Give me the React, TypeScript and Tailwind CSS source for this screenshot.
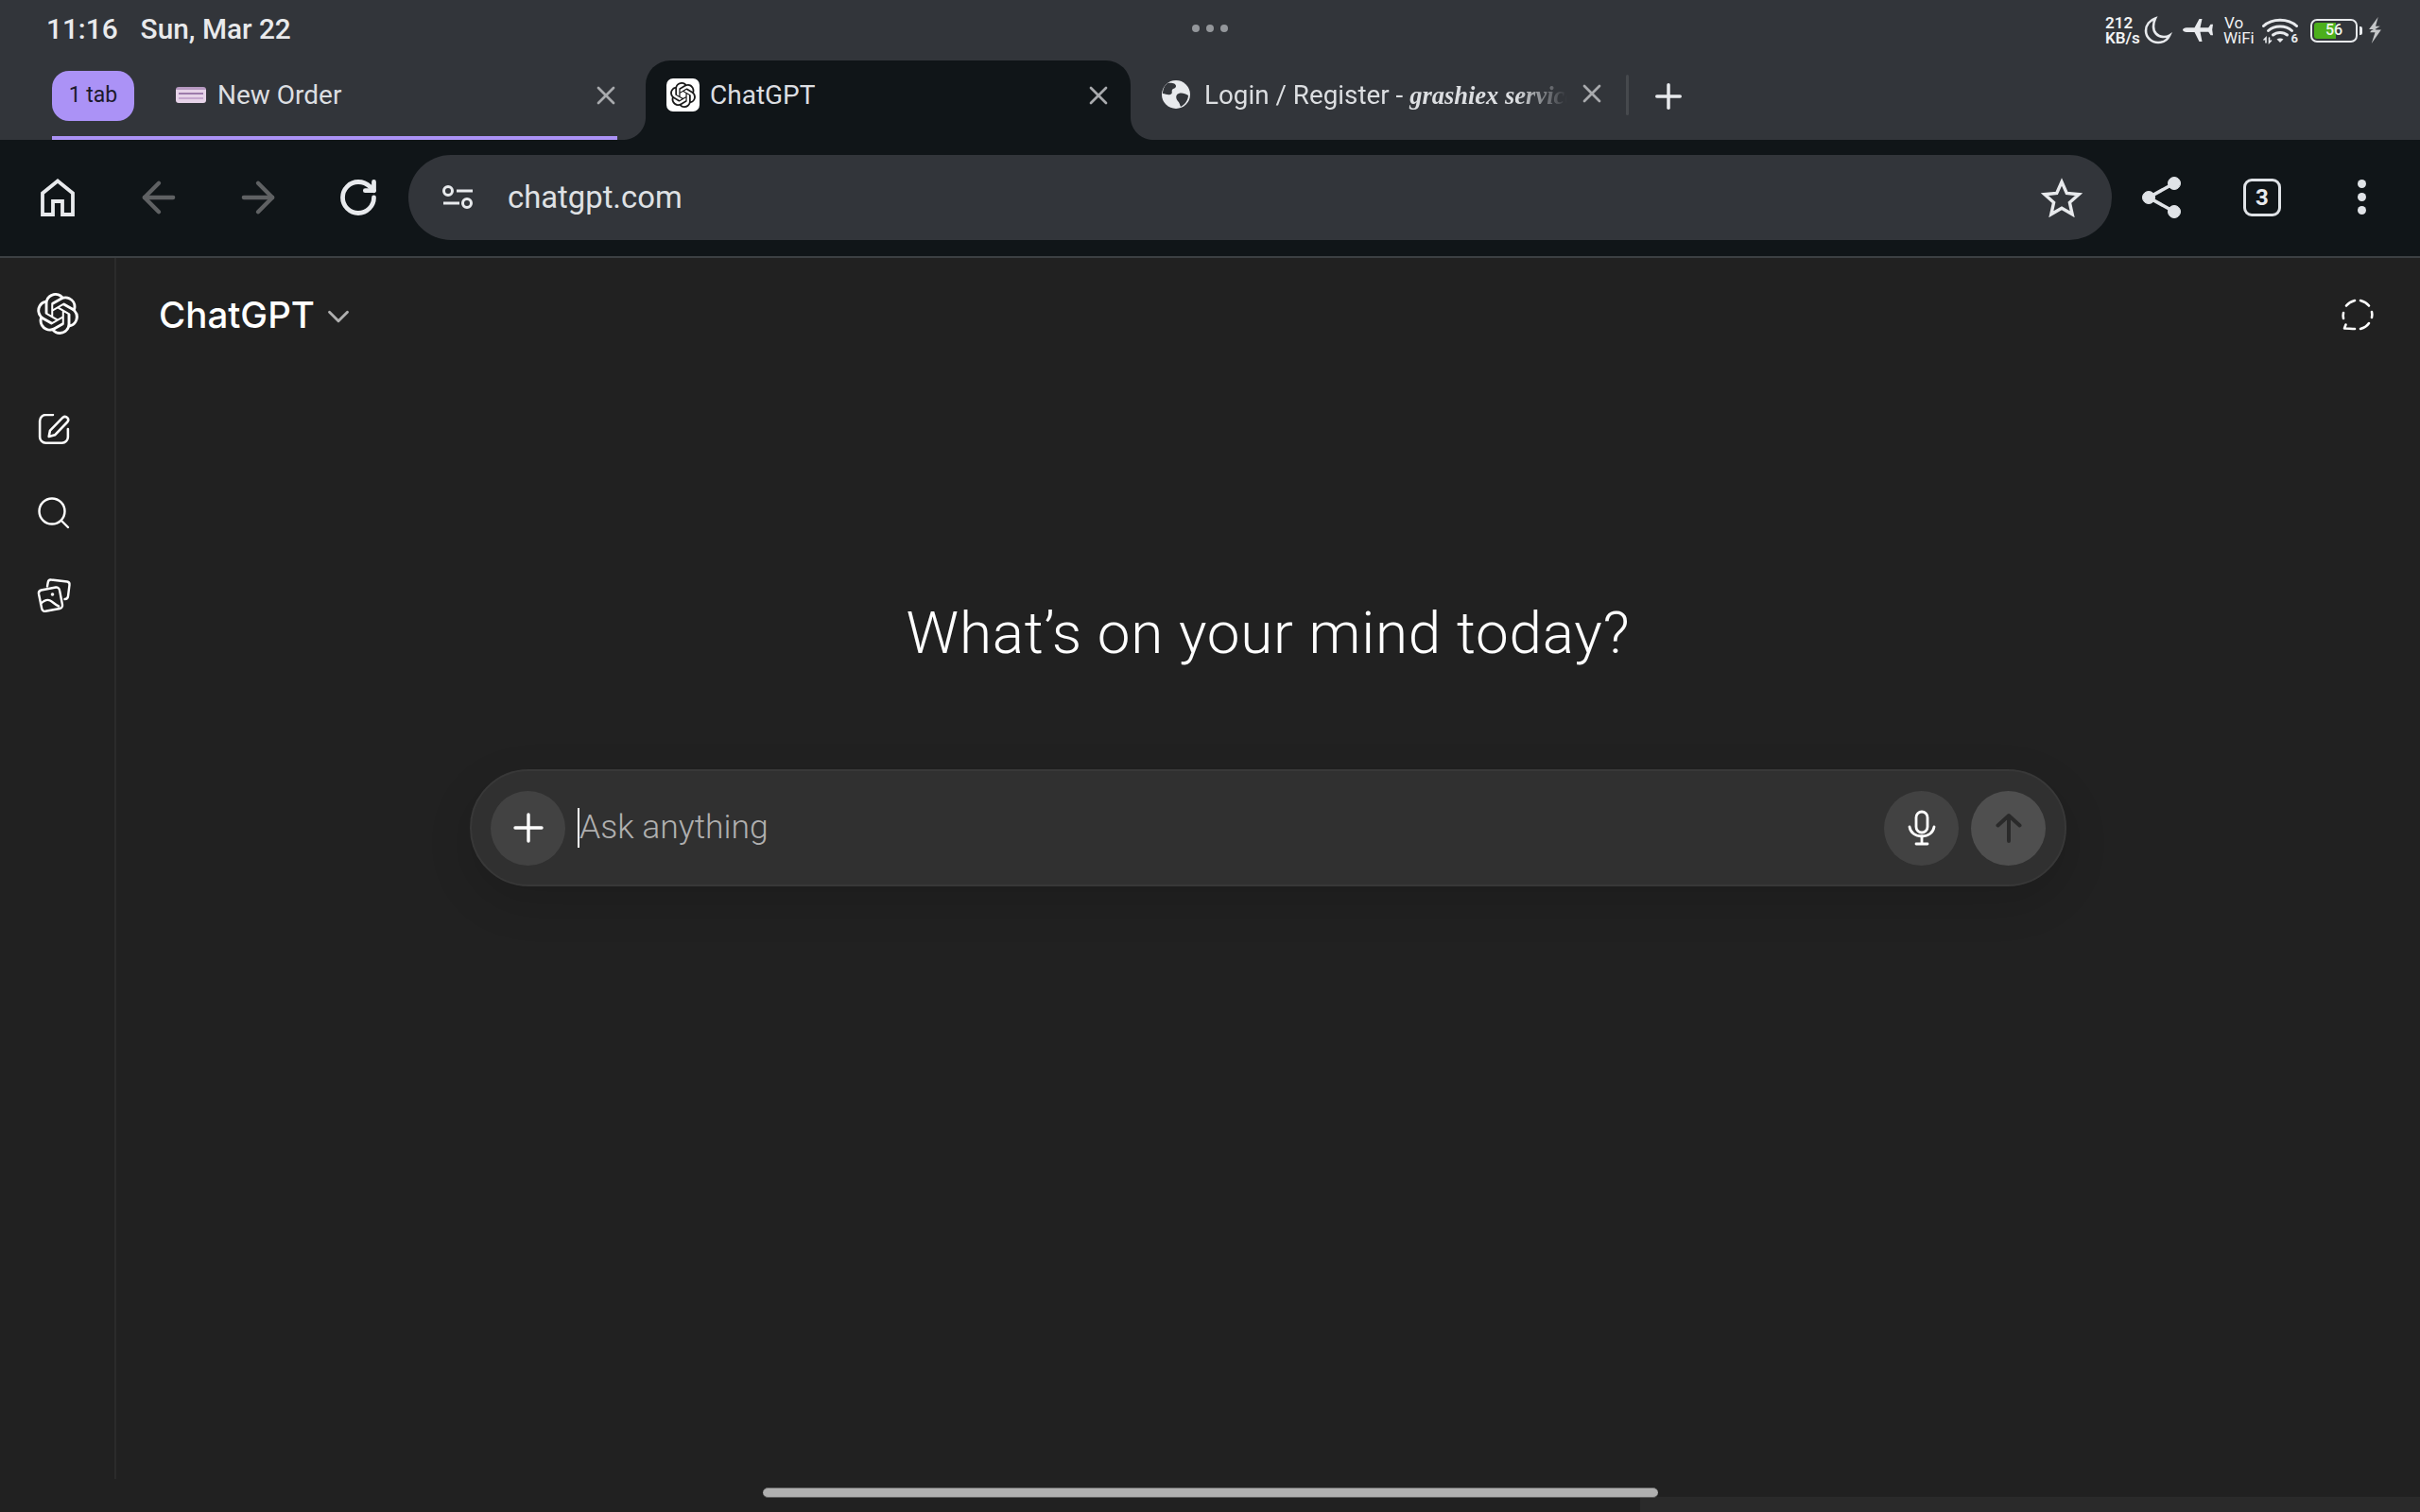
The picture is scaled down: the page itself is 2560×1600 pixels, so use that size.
import { ArrowLeft, ArrowRight, ChevronDown, Plus, RotateCw, X } from "lucide-react";

const OPENAI =
  "M22.2819 9.8211a5.9847 5.9847 0 0 0-.5157-4.9108 6.0462 6.0462 0 0 0-6.5098-2.9A6.0651 6.0651 0 0 0 4.9807 4.1818a5.9847 5.9847 0 0 0-3.9977 2.9 6.0462 6.0462 0 0 0 .7427 7.0966 5.98 5.98 0 0 0 .511 4.9107 6.051 6.051 0 0 0 6.5146 2.9001A5.9847 5.9847 0 0 0 13.2599 24a6.0557 6.0557 0 0 0 5.7718-4.2058 5.9894 5.9894 0 0 0 3.9977-2.9001 6.0557 6.0557 0 0 0-.7475-7.0729zm-9.022 12.6081a4.4755 4.4755 0 0 1-2.8764-1.0408l.1419-.0804 4.7783-2.7582a.7948.7948 0 0 0 .3927-.6813v-6.7369l2.02 1.1686a.071.071 0 0 1 .038.052v5.5826a4.504 4.504 0 0 1-4.4945 4.4944zm-9.6607-4.1254a4.4708 4.4708 0 0 1-.5346-3.0137l.142.0852 4.783 2.7582a.7712.7712 0 0 0 .7806 0l5.8428-3.3685v2.3324a.0804.0804 0 0 1-.0332.0615L9.74 19.9502a4.4992 4.4992 0 0 1-6.1408-1.6464zM2.3408 7.8956a4.485 4.485 0 0 1 2.3655-1.9728V11.6a.7664.7664 0 0 0 .3879.6765l5.8144 3.3543-2.0201 1.1685a.0757.0757 0 0 1-.071 0l-4.8303-2.7865A4.504 4.504 0 0 1 2.3408 7.872zm16.5963 3.8558L13.1038 8.364 15.1192 7.2a.0757.0757 0 0 1 .071 0l4.8303 2.7913a4.4944 4.4944 0 0 1-.6765 8.1042v-5.6772a.79.79 0 0 0-.407-.667zm2.0107-3.0231l-.142-.0852-4.7735-2.7818a.7759.7759 0 0 0-.7854 0L9.409 9.2297V6.8974a.0662.0662 0 0 1 .0284-.0615l4.8303-2.7866a4.4992 4.4992 0 0 1 6.6802 4.66zM8.3065 12.863l-2.02-1.1638a.0804.0804 0 0 1-.038-.0567V6.0742a4.4992 4.4992 0 0 1 7.3757-3.4537l-.142.0805L8.704 5.459a.7948.7948 0 0 0-.3927.6813zm1.0976-2.3654l2.602-1.4998 2.6069 1.4998v2.9994l-2.5974 1.4997-2.6067-1.4997Z";

function OpenAiLogo({ className }: { className: string }) {
  return (
    <svg viewBox="0 0 24 24" fill="currentColor" className={className}>
      <path d={OPENAI} />
    </svg>
  );
}

function StatusIcons() {
  return (
    <div className="flex items-center text-[#e8eaed]">
      <div className="w-[36px] text-[17px] leading-[16px] font-semibold text-[#f1f2f3]">
        <div>212</div>
        <div className="whitespace-nowrap">KB/s</div>
      </div>
      {/* moon */}
      <svg viewBox="0 0 30 30" className="ml-[5px] w-[30px] h-[30px]" fill="none" stroke="currentColor" strokeWidth="2.6">
        <path d="M12 2.5C6 4.5 2 9.5 2 15.5 2 22.5 8 28 15 28c5.5 0 10-3 12-7.5-1.5 1-4 1.500-6 1.500-7 0-11-5-11-11 0-3 .8-6 2-8.500z" />
      </svg>
      {/* plane */}
      <svg viewBox="0 0 34 30" className="ml-[11px] w-[34px] h-[30px]" fill="currentColor">
        <path d="M0 14.500c0-1.300 2-2.300 4-2.300h8.500L17.500 3h3l-2 9.200h8.700l2.300-3.500H32l-.8 5.800.8 5.800h-2.500l-2.300-3.500h-8.700l2 10.200h-3L12.500 17H4c-2 0-4-1.200-4-2.500z" />
      </svg>
      <div className="ml-[9px] w-[34px] text-[17px] leading-[16px] font-normal text-[#f1f2f3]">
        <div className="pl-[1px]">Vo</div>
        <div className="whitespace-nowrap">WiFi</div>
      </div>
      {/* wifi with activity arrows and the 6 */}
      <div className="ml-[7px] relative w-[38px] h-[30px]">
        <svg viewBox="0 0 38 30" className="w-[38px] h-[30px]" fill="none" stroke="currentColor" strokeWidth="3" strokeLinecap="round">
          <path d="M1.500 10.500C10.500 2 27.500 2 36.500 10.500" />
          <path d="M6.500 15.500C13 9.500 25 9.500 31.500 15.500" />
          <path d="M11.500 20C15.500 16.500 22.500 16.500 26.500 20" />
          <path d="M15.500 24.500l3.500 3.500 3.500-3.500c-2-1.300-5-1.300-7 0z" fill="currentColor" stroke="none" />
          <path d="M2 25l2-2v5M7.500 23v5l2-2" strokeWidth="1.600" />
        </svg>
        <span className="absolute right-[0px] bottom-[-1px] text-[13px] leading-[14px] font-bold">6</span>
      </div>
      {/* battery */}
      <div className="ml-[13px] flex items-center">
        <div className="w-[50px] h-[25px] rounded-[7px] border-2 border-[#e8eaed] p-[2px] relative">
          <div className="w-[23px] h-full rounded-l-[3px] bg-[#4caf1c]" />
          <span className="absolute inset-0 flex items-center justify-center text-[16px] leading-none font-medium text-[#eef5ea]">56</span>
        </div>
        <div className="ml-[2px] w-[3px] h-[9px] rounded-r-[2px] bg-[#e8eaed]" />
      </div>
      <svg viewBox="0 0 14 26" className="ml-[6px] mr-[1px] w-[15px] h-[28px]" fill="#c4c6c8">
        <path d="M10 0 1 12h4.500L3 13.500l-1 1.500h5L3.500 26 13 12.500H8l-1-.5 5-3H7.500z" />
      </svg>
    </div>
  );
}

function StatusBar() {
  return (
    <div className="h-[64px] flex items-center pl-[49px] pr-[39px] text-[#e9eaec]">
      <div className="flex-1 flex items-center text-[29.800px] leading-none font-medium pb-[3px]">
        <span>11:16</span>
        <span className="ml-[24px]">Sun, Mar 22</span>
      </div>
      <div className="flex items-center gap-[7px] pb-[4px] w-[260px] mr-[10px] justify-center">
        <span className="w-[8px] h-[8px] rounded-full bg-[#94979b]" />
        <span className="w-[8px] h-[8px] rounded-full bg-[#94979b]" />
        <span className="w-[8px] h-[8px] rounded-full bg-[#94979b]" />
      </div>
      <div className="flex-1 flex justify-end">
        <StatusIcons />
      </div>
    </div>
  );
}

function TabClose() {
  return <X className="w-[32px] h-[32px] text-[#a8aaad]" strokeWidth={2} />;
}

function TabStrip() {
  return (
    <div className="h-[84px] flex pl-[55px]">
      {/* tab group */}
      <div className="w-[598px] h-full pt-[11px] border-b-[4px] border-[#ab92f6] flex items-start">
        <div className="w-[87px] h-[53px] rounded-[18px] bg-[#ab92f6] flex items-center justify-center text-[23px] text-[#1c1a2b]">
          1 tab
        </div>
        {/* little pink favicon */}
        <div className="ml-[44px] mt-[17px] w-[32px] h-[17px] rounded-[3px] bg-[#e6d3e8] border-t-[3px] border-[#b79ac2] relative">
          <div className="absolute inset-x-[3px] top-[3px] h-[2px] bg-[#9c7bab]" />
          <div className="absolute inset-x-[3px] top-[8px] h-[2px] bg-[#c6a8cf]" />
        </div>
        <span className="ml-[12px] mt-[8px] text-[28px] leading-[36px] text-[#dcdee1]">New Order</span>
        <div className="ml-auto mt-[10px] mr-[-4px]">
          <TabClose />
        </div>
      </div>

      {/* active tab */}
      <div className="ml-[30px] w-[513px] h-full bg-[#101518] rounded-t-[26px] relative flex items-start pl-[22px] pt-[19px]">
        <span className="absolute left-[-24px] bottom-0 w-[24px] h-[24px] bg-[radial-gradient(circle_at_0_0,#32353a_23.5px,#101518_24.5px)]" />
        <span className="absolute right-[-24px] bottom-0 w-[24px] h-[24px] bg-[radial-gradient(circle_at_100%_0,#32353a_23.5px,#101518_24.5px)]" />
        <div className="w-[35px] h-[35px] rounded-[7px] bg-white flex items-center justify-center text-[#1b1b1b]">
          <OpenAiLogo className="w-[27px] h-[27px]" />
        </div>
        <span className="ml-[11px] text-[28px] leading-[36px] text-[#dcdee1]">ChatGPT</span>
        <div className="ml-auto mr-[18px] mt-[2px]">
          <TabClose />
        </div>
      </div>

      {/* third tab */}
      <div className="ml-[33px] h-full flex items-start pt-[18px]">
        <div className="w-[30px] h-[30px] mt-[3px] rounded-full bg-[#e8eaed] relative overflow-hidden">
          <svg viewBox="0 0 30 30" className="w-full h-full" fill="#32353a">
            <path d="M6 3c4-1 9 0 9 3 0 3-3 2-4 4s1 4-2 5-5-1-8-1c0-4 2-9 5-11zM18 14c3-1 7 0 10 2 0 5-4 10-8 12-1-2-1-4-3-6s-3-7 1-8z" />
          </svg>
        </div>
        <div className="ml-[15px] mt-[1px] w-[384px] whitespace-nowrap overflow-hidden [mask-image:linear-gradient(to_right,black_86%,transparent_100%)] text-[27.800px] leading-[36px] text-[#dcdee1]">
          Login / Register -{" "}
          <span className="font-['Liberation_Serif',serif] italic font-bold text-[26.500px]">grashiex service</span>
        </div>
        <div className="ml-[10px] mt-[1px]">
          <TabClose />
        </div>
        <div className="ml-[20px] mt-[-3px] w-[3px] h-[43px] rounded-full bg-[#46494d]" />
        <Plus className="ml-[21px] mt-[-1px] w-[42px] h-[42px] text-[#e8eaed]" strokeWidth={2} />
      </div>
    </div>
  );
}

function HomeIcon() {
  return (
    <svg viewBox="0 0 36 40" className="w-[36px] h-[40px]" fill="none" stroke="#e8eaed" strokeWidth="3.800">
      <path d="M18 2.500 2 15.500V38h11V24h10v14h11V15.500z" strokeLinejoin="miter" />
    </svg>
  );
}

function TuneIcon() {
  return (
    <svg viewBox="0 0 36 28" className="w-[36px] h-[28px]" fill="none" stroke="#e8eaed" strokeWidth="3">
      <circle cx="7" cy="7" r="4.500" />
      <path d="M16 7h17M2 20h17" />
      <circle cx="27" cy="20" r="4.500" />
    </svg>
  );
}

function StarIcon() {
  return (
    <svg viewBox="0 0 44 42" className="ml-auto w-[44px] h-[42px]" fill="none" stroke="#e8eaed" strokeWidth="3.400" strokeLinejoin="miter">
      <path d="M22 4.500 27.300 16.500 40 17.700 30.400 26.300 33.200 38.800 22 32.200 10.800 38.800 13.600 26.300 4 17.700 16.700 16.500z" />
    </svg>
  );
}

function ShareIcon() {
  return (
    <svg viewBox="0 0 42 46" className="w-[42px] h-[46px]" fill="#e0e3e7" stroke="#e0e3e7">
      <path d="M34 8 7 23l27 15" fill="none" strokeWidth="3.600" />
      <circle cx="34" cy="8" r="6.500" />
      <circle cx="7" cy="23" r="6.500" />
      <circle cx="34" cy="38" r="6.500" />
    </svg>
  );
}

function Toolbar() {
  return (
    <div className="h-[125px] bg-[#101518] border-b-2 border-[#3c4043] flex items-center pb-[2px] relative">
      <div className="w-[122px] flex justify-center">
        <HomeIcon />
      </div>
      <div className="w-[104px] flex justify-center ml-[-6px]">
        <ArrowLeft className="w-[52px] h-[52px] text-[#5f6163]" strokeWidth={2} />
      </div>
      <div className="w-[106px] flex justify-center">
        <ArrowRight className="w-[52px] h-[52px] text-[#5f6163]" strokeWidth={2} />
      </div>
      <div className="w-[106px] flex justify-center">
        <RotateCw className="w-[44px] h-[44px] text-[#e8eaed]" strokeWidth={2.6} />
      </div>
      {/* address bar */}
      <div className="w-[1802px] h-[90px] rounded-full bg-[#32353a] flex items-center pl-[35px] pr-[31px]">
        <TuneIcon />
        <span className="ml-[34px] pt-[2px] text-[32.800px] leading-none text-[#dfe1e4]">chatgpt.com</span>
        <StarIcon />
      </div>
      <div className="ml-[32px] w-[42px]">
        <ShareIcon />
      </div>
      <div className="ml-[65px] w-[40px] h-[40px] rounded-[9px] border-[3px] border-[#dfe2e6] flex items-center justify-center text-[24px] leading-none font-bold text-[#e8eaed]">
        3
      </div>
      <div className="ml-[81px] flex flex-col gap-[5px]">
        <span className="w-[9px] h-[9px] rounded-full bg-[#e0e3e7]" />
        <span className="w-[9px] h-[9px] rounded-full bg-[#e0e3e7]" />
        <span className="w-[9px] h-[9px] rounded-full bg-[#e0e3e7]" />
      </div>
    </div>
  );
}

function ComposeIcon() {
  return (
    <svg viewBox="0 0 32 32" className="w-[34px] h-[34px]" fill="none" stroke="#fff" strokeWidth="2.400" strokeLinecap="round" strokeLinejoin="round">
      <path d="M15 2H8a6 6 0 0 0-6 6v16a6 6 0 0 0 6 6h16a6 6 0 0 0 6-6V16" transform="translate(0 -1)" />
      <path d="M25 3.500a3.200 3.200 0 0 1 4.500 4.500L17 21l-6 1.500 1.200-6z" />
    </svg>
  );
}

function SearchIcon() {
  return (
    <svg viewBox="0 0 34 34" className="w-[34px] h-[34px]" fill="none" stroke="#fff" strokeWidth="2.400" strokeLinecap="round">
      <circle cx="15" cy="15" r="13.500" />
      <path d="m25 25 7 7" />
    </svg>
  );
}

function GalleryIcon() {
  return (
    <svg viewBox="0 0 38 38" className="w-[38px] h-[38px]" fill="none" stroke="#fff" strokeWidth="2.400" strokeLinecap="round" strokeLinejoin="round">
      <path d="M5.500 13.500 21 10.500a3.500 3.500 0 0 1 4 3l3 15.500a3.500 3.500 0 0 1-2.800 4l-15 2.800a3.500 3.500 0 0 1-4-2.800L3 17.500a3.500 3.500 0 0 1 2.500-4z" />
      <path d="M12 9.500 12.800 5a3 3 0 0 1 3.400-2.500L33 4.500a3 3 0 0 1 2.500 3.300L34 20a3.500 3.500 0 0 1-3.500 3" />
      <circle cx="17.500" cy="18" r="1.800" fill="#fff" stroke="none" />
      <path d="M5 28c3-3 7-5 10-3.500s6 5 9 6" />
    </svg>
  );
}

function Sidebar() {
  return (
    <aside className="w-[123px] h-[1292px] border-r-2 border-[#2b2b2b] shrink-0 flex flex-col items-start">
      <OpenAiLogo className="ml-[39px] mt-[37px] w-[44px] h-[44px] text-white" />
      <div className="ml-[40px] mt-[84px]">
        <ComposeIcon />
      </div>
      <div className="ml-[40px] mt-[54px]">
        <SearchIcon />
      </div>
      <div className="ml-[38px] mt-[51px]">
        <GalleryIcon />
      </div>
    </aside>
  );
}

function TempChatIcon() {
  return (
    <svg viewBox="0 0 36 36" className="w-[36px] h-[36px]" fill="none" stroke="#fff" strokeWidth="2.600" strokeLinecap="round" strokeLinejoin="round">
      <path d="M6 8.500C8 6 11 4 15 3" />
      <path d="M21 3c4 1 7 3 9 5.500" />
      <path d="M33 15c.5 2 .5 4 0 6" />
      <path d="M30 27c-2 3-5 5-9 6" />
      <path d="M15 33c-3 0-8-.5-11-.5l1.500-4" />
      <path d="M3 22c-.5-2-.5-4 0-6" />
    </svg>
  );
}

function Composer() {
  return (
    <div className="w-[1689px] h-[124px] rounded-full bg-[#303030] border-2 border-[#383838] shadow-[0_16px_48px_rgba(0,0,0,0.14)] flex items-center pl-[20px] pr-[20px]">
      <div className="w-[79px] h-[79px] rounded-full bg-[#424242] flex items-center justify-center">
        <Plus className="w-[48px] h-[48px] text-white" strokeWidth={1.7} />
      </div>
      <div className="ml-[13px] w-[2px] h-[42px] bg-white" />
      <span className="text-[35.500px] leading-none font-light text-[#afafaf]">Ask anything</span>
      <div className="ml-auto w-[79px] h-[79px] rounded-full bg-[#424242] flex items-center justify-center">
        <svg viewBox="0 0 30 38" className="w-[30px] h-[38px]" fill="none" stroke="#fff" strokeWidth="2.800" strokeLinecap="round">
          <rect x="9" y="2" width="12" height="22" rx="6" />
          <path d="M2 18c1 6 6 10 13 10s12-4 13-10" />
          <path d="M15 28v7M9 36h12" />
        </svg>
      </div>
      <div className="ml-[13px] w-[79px] h-[79px] rounded-full bg-[#4f4f4f] flex items-center justify-center">
        <svg viewBox="0 0 28 32" className="w-[28px] h-[32px]" fill="none" stroke="#2a2a2a" strokeWidth="4" strokeLinecap="round" strokeLinejoin="round">
          <path d="M14 30V3M2.500 13.500 14 3l11.500 10.500" />
        </svg>
      </div>
    </div>
  );
}

export default function App() {
  return (
    <div className="w-[2560px] h-[1600px] bg-[#212121] overflow-hidden relative flex flex-col font-['Roboto',sans-serif]">
      <header className="bg-[#32353a] shrink-0">
        <StatusBar />
        <TabStrip />
      </header>
      <Toolbar />

      <div className="flex flex-1">
        <Sidebar />
        <main className="flex-1 flex flex-col">
          <div className="h-[120px] flex items-center pl-[45px] pr-[48px]">
            <span className="font-['Inter',sans-serif] text-[38.500px] leading-none font-[550] text-white">ChatGPT</span>
            <ChevronDown className="ml-[6px] mt-[3px] w-[38px] h-[38px] text-[#afafaf]" strokeWidth={1.8} />
            <div className="ml-auto">
              <TempChatIcon />
            </div>
          </div>
          <div className="flex flex-col items-center pt-[239px]">
            <h1 className="text-[62px] leading-[76px] font-light text-white tracking-[0.750px]">What’s on your mind today?</h1>
            <div className="mt-[106px]">
              <Composer />
            </div>
          </div>
        </main>
      </div>

      {/* gesture pill and the sliver of panel under it */}
      <div className="absolute right-0 bottom-0 w-[825px] h-[16px] bg-[#2a2a2a]" />
      <div className="absolute left-[807px] top-[1574px] w-[947px] h-[11px] rounded-full bg-[#b0b0b0] border-y border-[#5e5e5e]" />
    </div>
  );
}
